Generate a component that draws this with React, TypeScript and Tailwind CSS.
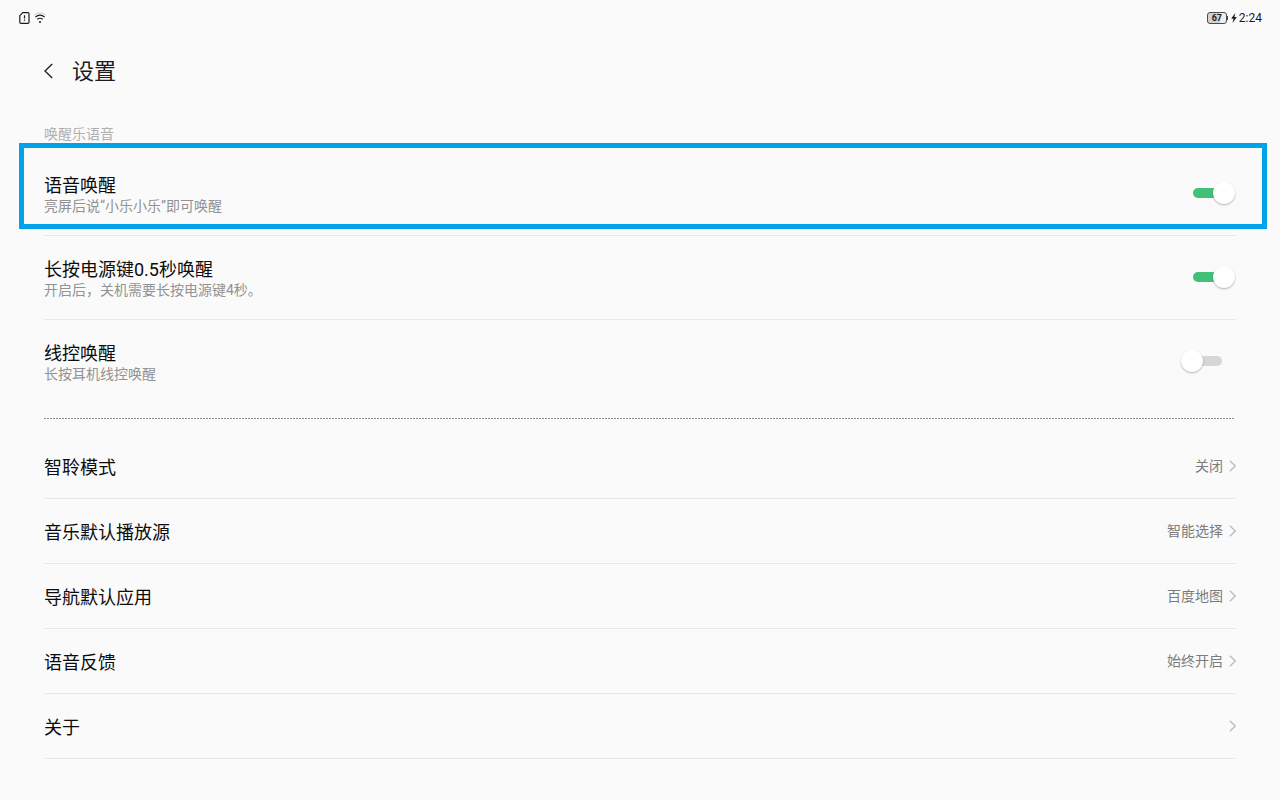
import { useState } from "react";

type ToggleItem = { id: string; title: string; note: string; on: boolean; highlighted?: boolean };
type LinkItem = { title: string; value?: string };

const toggleItems: ToggleItem[] = [
  { id: "voice", title: "语音唤醒", note: "亮屏后说“小乐小乐”即可唤醒", on: true, highlighted: true },
  { id: "power", title: "长按电源键0.5秒唤醒", note: "开启后，关机需要长按电源键4秒。", on: true },
  { id: "headset", title: "线控唤醒", note: "长按耳机线控唤醒", on: false },
];

const linkItems: LinkItem[] = [
  { title: "智聆模式", value: "关闭" },
  { title: "音乐默认播放源", value: "智能选择" },
  { title: "导航默认应用", value: "百度地图" },
  { title: "语音反馈", value: "始终开启" },
  { title: "关于" },
];

function StatusBar() {
  return (
    <div className="flex h-9 items-center justify-between pr-[18px] pl-[19px]">
      <div className="flex items-center gap-1">
        <svg width="11" height="12" viewBox="0 0 11 12" fill="none" aria-hidden="true">
          <path d="M3.8.6h5q1.200 0 1.200 1.200v8.400q0 1.200-1.200 1.200H2Q.8 11.400.8 10.200V3.600Z" stroke="#1c1c1c" strokeWidth="1.200" strokeLinejoin="round" />
          <path d="M5.500 3.200v3.400M5.500 7.600v1.200" stroke="#1c1c1c" strokeWidth="1.200" />
        </svg>
        <svg width="12" height="12" viewBox="0 0 12 12" fill="none" aria-hidden="true">
          <path d="M.4 3.200Q6-1.300 11.600 3.200" stroke="#c8c8c8" strokeWidth="1" />
          <path d="M1.400 5Q6 1.300 10.600 5" stroke="#1c1c1c" strokeWidth="1.100" />
          <path d="M3.300 7.300Q6 5.100 8.700 7.300" stroke="#1c1c1c" strokeWidth="1.100" />
          <circle cx="6" cy="10" r="1" fill="#1c1c1c" />
        </svg>
      </div>
      <div className="flex items-center gap-[3px] text-[12px] leading-4 text-[#1c1c1c]">
        <div className="flex items-center">
          <span className="flex h-3 w-5 items-center justify-center rounded-[3px] border border-[#4a4a4a] bg-linear-to-r from-[#d2d2d2] from-65% to-[#eeeeee] to-65% text-[9px] leading-none font-bold">
            67
          </span>
          <span className="h-1 w-px bg-[#4a4a4a]" />
        </div>
        <div className="flex items-center gap-0.5">
          <svg width="6" height="10" viewBox="0 0 6 10" aria-hidden="true">
            <path d="M4.300 0 .2 5.500l2.300.2L1.400 10 5.800 4.300 3.400 4Z" fill="#1c1c1c" />
          </svg>
          <time>2:24</time>
        </div>
      </div>
    </div>
  );
}

function ToggleRow({ item, divided }: { item: ToggleItem; divided: boolean }) {
  const [on, setOn] = useState(item.on);
  return (
    <li className={`relative flex h-[84px] items-center justify-between border-b ${divided ? "border-[#e8e8e8]" : "border-transparent"}`}>
      <div className="pb-0.5">
        <label htmlFor={item.id} className="block text-[18px] leading-[26px] text-[#0c0c0c]">
          {item.title}
        </label>
        <p id={`${item.id}-note`} className="text-[14px] leading-[14px] text-[#929292]">
          {item.note}
        </p>
      </div>
      <input
        id={item.id}
        type="checkbox"
        role="switch"
        aria-describedby={`${item.id}-note`}
        checked={on}
        onChange={(e) => setOn(e.target.checked)}
        className="relative mr-[14px] mb-0.5 h-2.5 w-[29px] cursor-pointer appearance-none rounded-full bg-[#d6d6d6] before:absolute before:-top-1.5 before:-left-3 before:size-[22px] before:rounded-full before:bg-white before:shadow-[0_1px_2px_rgba(0,0,0,0.28)] checked:bg-[#43c078] checked:before:left-5"
      />
      {item.highlighted && (
        <div className="pointer-events-none absolute -top-[9px] -right-[31px] bottom-1.5 -left-[25px] border-5 border-[#00a2e9]" />
      )}
    </li>
  );
}

function LinkRow({ item }: { item: LinkItem }) {
  return (
    <li className="border-b border-[#e8e8e8]">
      <a href="#" className="flex h-16 items-center justify-between">
        <span className="pt-[3px] text-[18px] leading-6 text-[#0c0c0c]">{item.title}</span>
        <span className="flex items-center gap-1.5 text-[14px] leading-5 text-[#7c7c7c]">
          {item.value}
          <svg width="7" height="12" viewBox="0 0 7 12" fill="none" aria-hidden="true">
            <path d="M.8.8 6.200 6 .8 11.200" stroke="#bdbdbd" strokeWidth="1.300" />
          </svg>
        </span>
      </a>
    </li>
  );
}

export default function App() {
  return (
    <div lang="zh-CN" className="min-h-screen bg-[#fafafa] font-[Roboto,'Noto_Sans_CJK_SC',sans-serif]">
      <StatusBar />
      <header className="flex h-[70px] items-center gap-[19px] px-11">
        <button type="button" aria-label="返回" className="cursor-pointer">
          <svg width="9" height="16" viewBox="0 0 9 16" fill="none" aria-hidden="true">
            <path d="M8.200 1 1 8l7.200 7" stroke="#1c1c1c" strokeWidth="1.300" />
          </svg>
        </button>
        <h1 className="pt-0.5 text-[22px] leading-8 text-[#1c1c1c]">设置</h1>
      </header>
      <main className="px-11 pt-[18px]">
        <h2 className="mb-2 text-[14px] leading-5 text-[#b0b0b0]">唤醒乐语音</h2>
        <ul>
          {toggleItems.map((item, i) => (
            <ToggleRow key={item.id} item={item} divided={i < toggleItems.length - 1} />
          ))}
        </ul>
        <div className="mt-3.5 mr-0.5 mb-[15px] h-px bg-[repeating-linear-gradient(90deg,#8f8f8f_0_2px,transparent_2px_3px)]" />
        <ul>
          {linkItems.map((item) => (
            <LinkRow key={item.title} item={item} />
          ))}
        </ul>
      </main>
    </div>
  );
}
